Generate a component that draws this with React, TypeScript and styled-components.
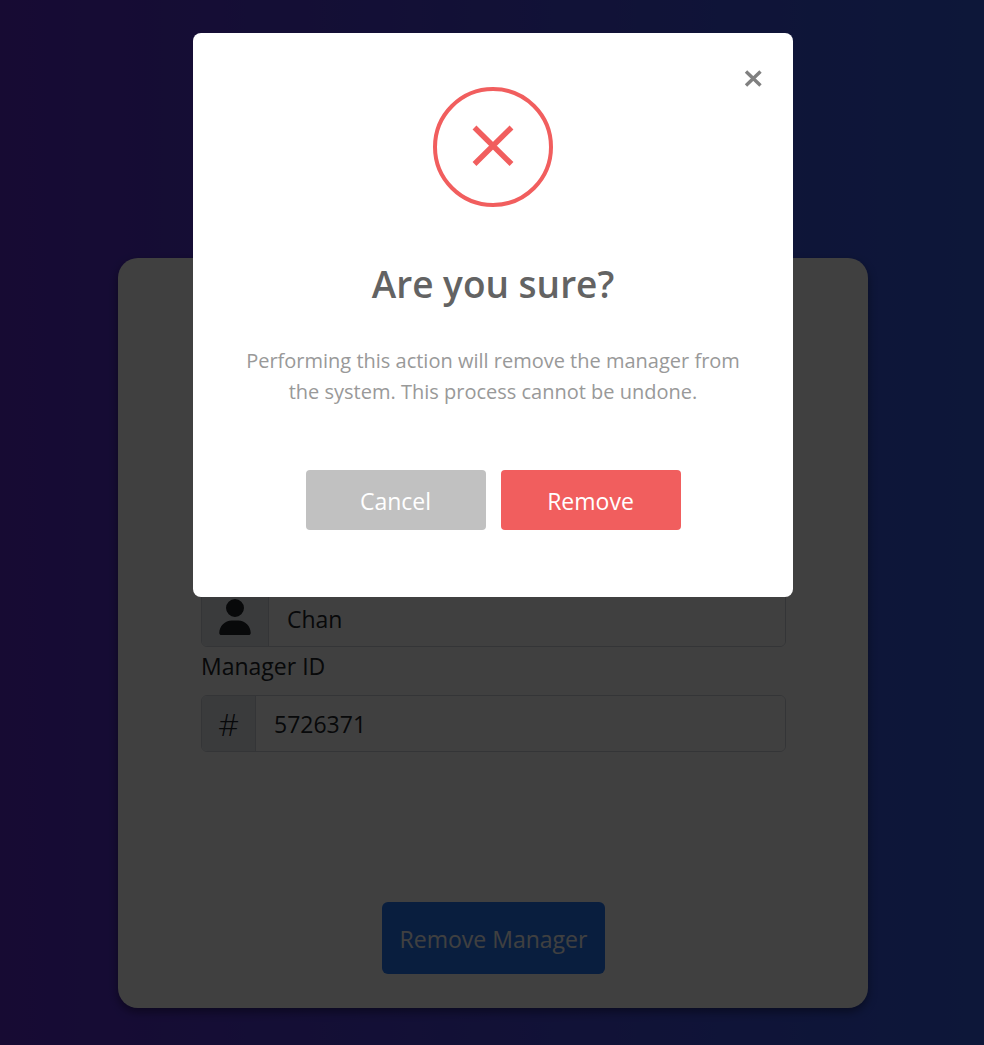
import React from "react";
import styled, { createGlobalStyle } from "styled-components";

const GlobalStyle = createGlobalStyle`
  *, *::before, *::after { box-sizing: border-box; }
  body {
    margin: 0;
    font-family: "Segoe UI", "Open Sans", "Noto Sans", sans-serif;
    font-size: 23px;
    line-height: 36px;
    color: #212529;
  }
  button, input { font: inherit; }
`;

const Page = styled.main`
  min-height: 100vh;
  padding: 258px 116px 37px 118px;
  background: linear-gradient(to right, #5c2ccc, #345ce4);
`;

const Card = styled.form`
  display: flex;
  flex-direction: column;
  min-height: 750px;
  max-width: 750px;
  margin: 0 auto;
  padding: 332px 82px 34px 83px;
  border-radius: 20px;
  background: #fff;
  box-shadow: 0 4px 10px rgba(0, 0, 0, 0.4);
`;

const FieldLabel = styled.label`
  margin: 1px 0 11px;
`;

const InputGroup = styled.div`
  display: flex;
  flex: none;
  height: 57px;
  border: 1px solid #ced4da;
  border-radius: 6px;
  overflow: hidden;
`;

const Addon = styled.span<{ $wide?: boolean }>`
  display: flex;
  flex: none;
  align-items: center;
  justify-content: center;
  width: ${({ $wide }) => ($wide ? 67 : 54)}px;
  background: #e6ebf0;
  border-right: 1px solid #ced4da;
  font-size: 32px;
  font-weight: 300;
`;

const UserIcon = styled.svg`
  width: 32px;
  height: 36px;
  margin-bottom: 3px;
  fill: currentColor;
`;

const TextInput = styled.input`
  flex: 1;
  min-width: 0;
  padding: 0 18px;
  border: 0;
  outline: 0;
  background: #fff;
  color: #212529;
`;

const SubmitButton = styled.button`
  align-self: center;
  width: 223px;
  height: 72px;
  margin-top: auto;
  padding: 2px 0 0;
  border: 0;
  border-radius: 6px;
  background: #2478f8;
  color: #fff;
`;

const Overlay = styled.div`
  position: fixed;
  inset: 0;
  display: flex;
  justify-content: center;
  align-items: flex-start;
  padding: 33px 0 0 2px;
  background: rgba(0, 0, 0, 0.75);
`;

const Dialog = styled.section`
  position: relative;
  display: flex;
  flex-direction: column;
  align-items: center;
  width: 100%;
  max-width: 600px;
  padding: 54px 48px 67px;
  border-radius: 8px;
  background: #fff;
  text-align: center;
`;

const CloseButton = styled.button`
  position: absolute;
  top: 30px;
  right: 24px;
  display: flex;
  padding: 0;
  border: 0;
  background: none;
  color: #808080;
`;

const WarningIcon = styled.svg`
  display: block;
  width: 120px;
  height: 120px;
  fill: none;
  stroke: #f15e5e;
`;

const Title = styled.h1`
  margin: 49px 0 0;
  color: #636363;
  font-size: 37px;
  font-weight: 600;
  line-height: 56px;
`;

const Message = styled.p`
  margin: 33px 0 0;
  color: #999;
  font-size: 20px;
  line-height: 31px;
`;

const Actions = styled.div`
  display: flex;
  gap: 15px;
  margin-top: 63px;
`;

const ActionButton = styled.button<{ $danger?: boolean }>`
  width: 180px;
  height: 60px;
  padding: 1px 0 0;
  border: 0;
  border-radius: 4px;
  background: ${({ $danger }) => ($danger ? "#f15e5e" : "#c1c1c1")};
  color: #fff;
`;

export default function App() {
  return (
    <>
      <GlobalStyle />
      <Page>
        <Card>
          <InputGroup>
            <Addon $wide>
              <UserIcon viewBox="0 0 448 512" aria-hidden="true">
                <path d="M224 256a128 128 0 1 0 0-256 128 128 0 1 0 0 256zm-45.700 48C79.800 304 0 383.800 0 482.300 0 498.700 13.300 512 29.700 512h388.600c16.400 0 29.700-13.300 29.700-29.700C448 383.800 368.200 304 269.700 304z" />
              </UserIcon>
            </Addon>
            <TextInput aria-label="Manager name" defaultValue="Chan" />
          </InputGroup>
          <FieldLabel htmlFor="manager-id">Manager ID</FieldLabel>
          <InputGroup>
            <Addon>#</Addon>
            <TextInput id="manager-id" defaultValue="5726371" />
          </InputGroup>
          <SubmitButton type="button">Remove Manager</SubmitButton>
        </Card>
      </Page>
      <Overlay>
        <Dialog role="dialog" aria-modal="true" aria-labelledby="dialog-title">
          <CloseButton type="button" aria-label="Close">
            <svg width="32" height="32" viewBox="0 0 32 32" fill="none" stroke="currentColor" strokeWidth="3.400">
              <path d="M9 8.500 23.500 22.500M23.500 8.500 9 22.500" />
            </svg>
          </CloseButton>
          <WarningIcon viewBox="0 0 120 120" aria-hidden="true">
            <circle cx="60" cy="60" r="58" strokeWidth="4" />
            <path d="M41.500 40.500 78.500 77M78.500 40.500 41.500 77" strokeWidth="5.500" />
          </WarningIcon>
          <Title id="dialog-title">Are you sure?</Title>
          <Message>
            Performing this action will remove the manager from the system. This process cannot be undone.
          </Message>
          <Actions>
            <ActionButton type="button">Cancel</ActionButton>
            <ActionButton type="button" $danger>Remove</ActionButton>
          </Actions>
        </Dialog>
      </Overlay>
    </>
  );
}
